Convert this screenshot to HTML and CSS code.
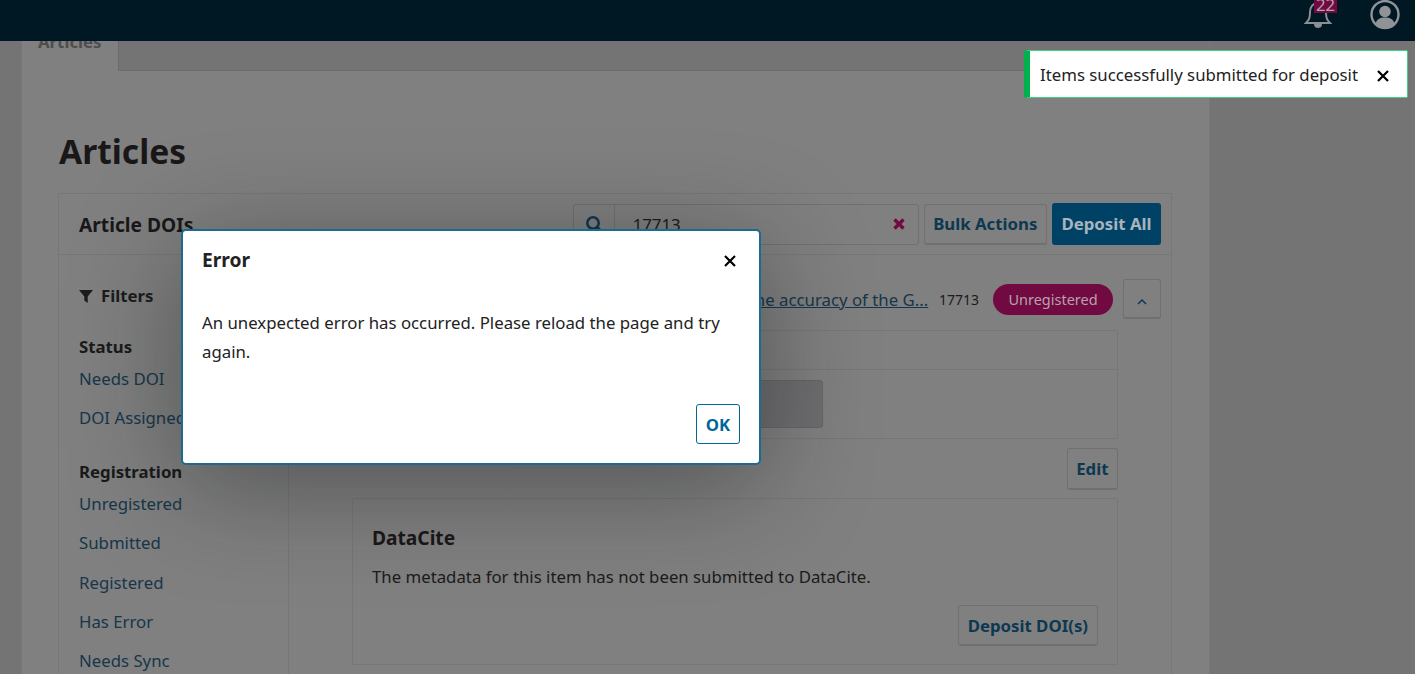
FILE: index.html
```html
<!DOCTYPE html>
<html lang="en">
<head>
  <meta charset="UTF-8">
  <meta name="viewport" content="width=device-width, initial-scale=1.0">
  <title>Articles - DOIs</title>
  <link rel="stylesheet" href="styles.css">
</head>
<body>
<header class="topbar">
  <div class="bell">
    <svg width="28" height="30" viewBox="0 0 28 30" fill="none" stroke="#8a8f93" stroke-width="2">
      <path d="M2 24c3-3 4-5 4-11 0-5 3-9 8-9s8 4 8 9c0 6 1 8 4 11z"/>
      <path d="M10 25c0 3 2 4 4 4s4-1 4-4" fill="#8a8f93" stroke="none"/>
    </svg>
    <span class="bell-count">22</span>
  </div>
  <svg class="avatar" width="30" height="30" viewBox="0 0 30 30">
    <circle cx="15" cy="14.500" r="13.500" fill="none" stroke="#8f9396" stroke-width="2.400"/>
    <circle cx="15" cy="11.500" r="5.800" fill="#8f9396"/>
    <path d="M5.500 24c1-5 4.500-6.500 9.500-6.500s8.500 1.500 9.500 6.500c-2.500 2.500-6 4-9.500 4s-7-1.500-9.500-4z" fill="#8f9396"/>
  </svg>
</header>

<main class="page">
  <div class="tabs">
    <div class="tab"><span>Articles</span></div>
  </div>
  <h1>Articles</h1>

  <section class="panel">
    <div class="panel-head">
      <h2>Article DOIs</h2>
      <div class="search">
        <span class="search-icon">
          <svg width="18" height="18" viewBox="0 0 18 18" fill="none" stroke="#0e3850" stroke-width="2.600"><circle cx="8" cy="8" r="5.700"/><path d="M12 12l4.500 4.500"/></svg>
        </span>
        <span class="search-value">17713</span>
        <svg class="search-clear" width="12" height="12" viewBox="0 0 12 12" stroke="#720a42" stroke-width="3.400"><path d="M1.500 1.500l9 9M10.500 1.500l-9 9"/></svg>
      </div>
      <button class="btn">Bulk Actions</button>
      <button class="btn btn-primary">Deposit All</button>
    </div>

    <div class="panel-body">
      <aside class="filters">
        <div class="filters-title">
          <svg width="14" height="14" viewBox="0 0 14 14" fill="#1c1c1c"><path d="M0 1h14L8.700 7.500V14L5.300 11.500V7.500z"/></svg>
          Filters
        </div>
        <h3>Status</h3>
        <a class="filter" href="#">Needs DOI</a>
        <a class="filter" href="#">DOI Assigned</a>
        <h3 class="second">Registration</h3>
        <a class="filter" href="#">Unregistered</a>
        <a class="filter" href="#">Submitted</a>
        <a class="filter" href="#">Registered</a>
        <a class="filter" href="#">Has Error</a>
        <a class="filter" href="#">Needs Sync</a>
      </aside>

      <div class="list">
        <div class="item-row">
          <a class="item-title" href="#">Comparative study of measurement methods and the accuracy of the G...</a>
          <span class="item-id">17713</span>
          <span class="badge">Unregistered</span>
          <button class="btn btn-toggle">
            <svg width="10" height="6" viewBox="0 0 10 6" fill="none" stroke="#0e3850" stroke-width="1.500"><path d="M1 5l4-4 4 4"/></svg>
          </button>
        </div>
        <div class="doi-box">
          <div class="doi-row"></div>
          <div class="doi-row doi-row-input"><div class="doi-input"></div></div>
        </div>
        <div class="edit-row"><button class="btn">Edit</button></div>
        <div class="agency">
          <h4>DataCite</h4>
          <p>The metadata for this item has not been submitted to DataCite.</p>
          <div class="agency-foot"><button class="btn">Deposit DOI(s)</button></div>
        </div>
      </div>
    </div>
  </section>
</main>

<div class="toast">
  <span>Items successfully submitted for deposit</span>
  <svg class="close" width="12" height="12" viewBox="0 0 12 12" stroke="#000" stroke-width="2.200"><path d="M1 1l10 10M11 1L1 11"/></svg>
</div>

<div class="dialog">
  <div class="dialog-head">
    <h2>Error</h2>
    <svg class="close" width="12" height="12" viewBox="0 0 12 12" stroke="#000" stroke-width="2.200"><path d="M1 1l10 10M11 1L1 11"/></svg>
  </div>
  <p>An unexpected error has occurred. Please reload the page and try again.</p>
  <div class="dialog-foot"><button class="btn-ok">OK</button></div>
</div>
</body>
</html>
```

FILE: styles.css
```css
* {
  box-sizing: border-box;
}
html, body {
  height: 674px;
}
body {
  margin: 0;
  overflow: hidden;
  background-color: #747474;
  color: #222;
  font-family: "Noto Sans", sans-serif;
  font-size: 16.800px;
}
h1, h2, h3, h4, p {
  margin: 0;
}
a {
  color: #17364a;
  text-decoration: none;
}
button {
  font-family: inherit;
}

/* top bar */
.topbar {
  height: 41px;
  background-color: #001824;
  display: flex;
  justify-content: flex-end;
  padding-right: 15px;
  overflow: hidden;
  gap: 34px;
}
.bell {
  position: relative;
  width: 32px;
  margin-top: -1px;
}
.bell-count {
  position: absolute;
  left: 10px;
  top: 1px;
  width: 23px;
  height: 13px;
  background-color: #720a42;
  color: #b8a0ae;
  font-size: 16.800px;
  line-height: 10px;
  text-align: center;
  overflow: hidden;
}
.avatar {
  display: block;
}

/* page */
.page {
  margin-left: 21px;
  width: 1189px;
  height: 633px;
  background-color: #808080;
  border-left: 1px solid #787878;
  border-right: 1px solid #787878;
  overflow: hidden;
}
.tabs {
  height: 30px;
  background-color: #747474;
  border-bottom: 1px solid #6c6c6c;
  margin-left: -1px;
  margin-right: -1px;
}
.tab {
  width: 98px;
  height: 30px;
  background-color: #808080;
  border-right: 1px solid #6c6c6c;
  padding-left: 17px;
  overflow: hidden;
  font-weight: 700;
  color: #4e4e4e;
}
.tab span {
  display: block;
  margin-top: -9px;
  line-height: 20px;
}
h1 {
  margin: 57px 0 0 37px;
  font-size: 33.600px;
  line-height: 46px;
  color: #1a1718;
}
.panel {
  margin: 19px 37px 0 36px;
  border: 1px solid #777;
  height: 520px;
}
.panel-head {
  height: 61px;
  display: flex;
  align-items: center;
  padding: 0 10px 0 20px;
  gap: 5px;
  border-bottom: 1px solid #777;
}
.panel-head h2 {
  flex: 1;
  font-size: 19.200px;
  color: #1a1718;
}
.search {
  width: 346px;
  height: 41px;
  display: flex;
  align-items: center;
  border: 1px solid #707070;
  border-radius: 3px;
}
.search-icon {
  width: 41px;
  height: 39px;
  border-right: 1px solid #707070;
  display: flex;
  align-items: center;
  justify-content: center;
}
.search-value {
  flex: 1;
  padding-left: 18px;
  color: #1b1b1b;
}
.search-clear {
  margin-right: 13px;
}
.btn {
  height: 41px;
  padding: 0 8.500px;
  background-color: #808080;
  border: 1px solid #707070;
  border-bottom-width: 2px;
  border-radius: 3px;
  color: #0e3850;
  font-size: 16.800px;
  font-weight: 700;
}
.btn-primary {
  height: 42px;
  background-color: #004266;
  border-color: #004266;
  color: #a9b4bc;
}

/* filters */
.panel-body {
  display: flex;
}
.filters {
  width: 233px;
  height: 460px;
  border-right: 1px solid #777;
  padding: 29px 0 0 20px;
  display: flex;
  flex-direction: column;
  align-items: flex-start;
}
.filters-title {
  font-weight: 700;
  color: #1c1c1c;
  line-height: 24px;
  display: flex;
  align-items: center;
  gap: 8px;
  margin-bottom: 27px;
}
.filters h3 {
  font-size: 16.800px;
  line-height: 24px;
  color: #1a1a1a;
  margin-bottom: 8px;
}
.filters h3.second {
  margin-top: 14px;
}
.filter {
  line-height: 24px;
  margin-bottom: 15.400px;
}

/* list */
.list {
  flex: 1;
  padding: 24px 10px 0 63px;
}
.item-row {
  display: flex;
  align-items: center;
  height: 41px;
}
.item-title {
  flex: none;
  width: 576px;
  white-space: nowrap;
  text-align: right;
  text-decoration: underline;
}
.item-id {
  margin-left: 11px;
  font-size: 14px;
  color: #1b1b1b;
}
.badge {
  margin-left: 14px;
  width: 120px;
  height: 31px;
  border-radius: 16px;
  background-color: #720a42;
  color: #b8a0ae;
  font-size: 14.500px;
  line-height: 31px;
  text-align: center;
}
.btn-toggle {
  margin: -1px 0 0 10px;
  width: 38px;
  height: 40px;
  padding: 0;
}
.doi-box {
  margin-top: 10px;
  margin-right: 43px;
  height: 109px;
  border: 1px solid #777;
}
.doi-row {
  height: 39px;
  border-bottom: 1px solid #777;
}
.doi-row-input {
  height: 68px;
  border-bottom: 0;
  padding: 10px 0 0 20px;
}
.doi-input {
  width: 450px;
  height: 48px;
  background-color: #6e6e70;
  border: 1px solid #666;
  border-radius: 3px;
}
.edit-row {
  margin-right: 43px;
  padding-top: 9px;
  display: flex;
  justify-content: flex-end;
}
.edit-row .btn {
  height: 42px;
}
.agency {
  margin: 8px 43px 0 0;
  height: 167px;
  border: 1px solid #777;
  padding: 25px 19px 0 19px;
}
.agency h4 {
  font-size: 19.200px;
  line-height: 28px;
  color: #1a1718;
}
.agency p {
  margin-top: 13px;
  line-height: 24px;
  color: #1b1b1b;
}
.agency-foot {
  margin-top: 16px;
  display: flex;
  justify-content: flex-end;
}
.agency-foot .btn {
  padding: 0 9px;
}

/* toast and dialog lie over the page */
.toast {
  position: absolute;
  left: 1024px;
  top: 50px;
  width: 384px;
  height: 48px;
  background-color: #fff;
  border: 1px solid #3fcf85;
  border-left: 6px solid #00b24e;
  border-radius: 2px;
  padding: 1px 0 0 10px;
  display: flex;
  align-items: center;
  justify-content: space-between;
  color: #222;
}
.toast .close {
  margin: 2px 18px 0 0;
}
.dialog {
  position: absolute;
  left: 181px;
  top: 229px;
  width: 580px;
  height: 236px;
  background-color: #fff;
  border: 2px solid #1c6a8e;
  border-radius: 5px;
  box-shadow: 0 20px 110px rgba(20, 22, 26, 0.42);
  padding: 0 19px;
  color: #222;
}
.dialog-head {
  display: flex;
  align-items: center;
  justify-content: space-between;
  height: 57px;
}
.dialog-head h2 {
  font-size: 19.200px;
  line-height: 54px;
}
.dialog-head .close {
  margin-right: 4px;
  margin-top: 2px;
}
.dialog p {
  margin-top: 20px;
  line-height: 29px;
}
.dialog-foot {
  margin-top: 38px;
  display: flex;
  justify-content: flex-end;
}
.btn-ok {
  width: 44px;
  height: 40px;
  padding: 0;
  background-color: #fff;
  border: 1px solid #006798;
  border-radius: 3px;
  color: #006798;
  font-size: 16.800px;
  font-weight: 700;
}
```
